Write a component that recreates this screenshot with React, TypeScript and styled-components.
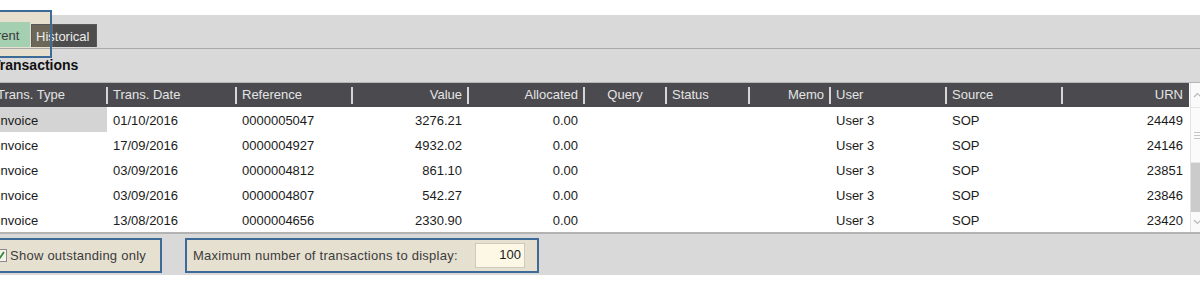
import styled, { createGlobalStyle } from "styled-components";

const GlobalStyle = createGlobalStyle`
  html, body {
    margin: 0;
    padding: 0;
    background: #fff;
  }
  body {
    font-family: "Liberation Sans", Arial, sans-serif;
    font-size: 13px;
  }
`;

type Align = "left" | "right" | "center";

const columns: { title: string; width: number; align: Align }[] = [
  { title: "Trans. Type", width: 116, align: "left" },
  { title: "Trans. Date", width: 129, align: "left" },
  { title: "Reference", width: 116, align: "left" },
  { title: "Value", width: 116, align: "right" },
  { title: "Allocated", width: 116, align: "right" },
  { title: "Query", width: 82, align: "center" },
  { title: "Status", width: 83, align: "left" },
  { title: "Memo", width: 81, align: "right" },
  { title: "User", width: 116, align: "left" },
  { title: "Source", width: 116, align: "left" },
  { title: "URN", width: 127, align: "right" },
];

const dataAlign: Align[] = [
  "left", "left", "left", "right", "right", "center", "left", "right", "left", "left", "right",
];

const rows = [
  ["Invoice", "01/10/2016", "0000005047", "3276.21", "0.00", "", "", "", "User 3", "SOP", "24449"],
  ["Invoice", "17/09/2016", "0000004927", "4932.02", "0.00", "", "", "", "User 3", "SOP", "24146"],
  ["Invoice", "03/09/2016", "0000004812", "861.10", "0.00", "", "", "", "User 3", "SOP", "23851"],
  ["Invoice", "03/09/2016", "0000004807", "542.27", "0.00", "", "", "", "User 3", "SOP", "23846"],
  ["Invoice", "13/08/2016", "0000004656", "2330.90", "0.00", "", "", "", "User 3", "SOP", "23420"],
];

export default function App() {
  return (
    <>
      <GlobalStyle />
      <Page>
        <Panel>
          <FocusFill />
          <TabRow>
            <Tab $active>Current</Tab>
            <Tab>Historical</Tab>
          </TabRow>
          <FocusBorder />
          <Title>Transactions</Title>
          <Table>
            <Grid>
              <HeaderRow>
                {columns.map((c, i) => (
                  <HeaderCell key={c.title} $w={c.width} $align={c.align} $sep={i < columns.length - 1}>
                    {c.title}
                  </HeaderCell>
                ))}
              </HeaderRow>
              {rows.map((r, ri) => (
                <Row key={ri}>
                  {r.map((v, ci) => (
                    <Cell key={ci} $w={columns[ci].width} $align={dataAlign[ci]} $selected={ri === 0 && ci === 0}>
                      {v}
                    </Cell>
                  ))}
                </Row>
              ))}
            </Grid>
            <ScrollBar>
              <ScrollButton $h={24}>
                <svg width="9" height="6" viewBox="0 0 9 6">
                  <path d="M1 5 L4.5 1.5 L8 5" fill="none" stroke="#b8b8b8" strokeWidth="1.2" />
                </svg>
              </ScrollButton>
              <Thumb>
                <Grip />
              </Thumb>
              <Track />
              <ScrollButton $h={20}>
                <svg width="9" height="6" viewBox="0 0 9 6">
                  <path d="M1 1 L4.5 4.5 L8 1" fill="none" stroke="#b8b8b8" strokeWidth="1.2" />
                </svg>
              </ScrollButton>
            </ScrollBar>
          </Table>
          <Footer>
            <GroupBox $w={174}>
              <CheckBox>
                <svg width="11" height="11" viewBox="0 0 11 11">
                  <path d="M2 5.5 L4.5 8.5 L9 2" fill="none" stroke="#2f8a3c" strokeWidth="1.8" />
                </svg>
              </CheckBox>
              <Label>Show outstanding only</Label>
            </GroupBox>
            <GroupBox $w={354}>
              <Label>Maximum number of transactions to display:</Label>
              <NumberBox>100</NumberBox>
            </GroupBox>
          </Footer>
        </Panel>
      </Page>
    </>
  );
}

const Page = styled.div`
  width: 1200px;
  height: 290px;
  overflow: hidden;
  padding-top: 15px;
  box-sizing: border-box;
`;

const Panel = styled.div`
  position: relative;
  margin-left: -30px;
  width: 1260px;
  height: 260px;
  background: #d9d9d9;
  display: flex;
  flex-direction: column;
`;

const FocusFill = styled.div`
  position: absolute;
  left: 0;
  top: -5px;
  width: 82px;
  height: 48px;
  background: #e7e0cf;
`;

const FocusBorder = styled.div`
  position: absolute;
  left: 0;
  top: -5px;
  width: 82px;
  height: 48px;
  box-sizing: border-box;
  border: 2px solid #3e6a97;
  pointer-events: none;
`;

const TabRow = styled.div`
  position: relative;
  display: flex;
  align-items: flex-end;
  height: 33px;
  border-bottom: 1px solid #a9a9a9;
  gap: 1px;
`;

const Tab = styled.div<{ $active?: boolean }>`
  height: ${(p) => (p.$active ? 25 : 23)}px;
  margin-bottom: 1px;
  display: flex;
  align-items: center;
  padding: 0 ${(p) => (p.$active ? "0 0 5px" : "0 0 4px")};
  font-size: 13px;
  white-space: nowrap;
  overflow: hidden;
  color: ${(p) => (p.$active ? "#3a3a3a" : "#ececec")};
  background: ${(p) =>
    p.$active ? "#a4cfb1" : "linear-gradient(to right, #6c6759 21px, #4d4d4d 21px)"};
  box-sizing: border-box;
  width: ${(p) => (p.$active ? "60px" : "66px")};
  border: 1px solid ${(p) => (p.$active ? "#a4cfb1" : "#5a5a5a")};
  border-bottom: none;
`;

const Title = styled.div`
  height: 33px;
  padding: 0 0 2px 22px;
  box-sizing: border-box;
  display: flex;
  align-items: center;
  font-size: 14px;
  font-weight: bold;
  color: #111;
`;

const Table = styled.div`
  display: flex;
  margin-left: 21px;
  border-top: 1px solid #b6b6b6;
  border-bottom: 2px solid #b3b3b3;
  background: #fff;
`;

const Grid = styled.div`
  display: flex;
  flex-direction: column;
`;

const HeaderRow = styled.div`
  display: flex;
  height: 24px;
  background: #4b4b4f;
`;

const HeaderCell = styled.div<{ $w: number; $align: Align; $sep: boolean }>`
  position: relative;
  width: ${(p) => p.$w}px;
  flex: none;
  box-sizing: border-box;
  padding: 0 6px 1px;
  display: flex;
  align-items: center;
  justify-content: ${(p) =>
    p.$align === "right" ? "flex-end" : p.$align === "center" ? "center" : "flex-start"};
  color: #e4e4e4;
  font-size: 13px;
  white-space: nowrap;
  &::after {
    content: "";
    display: ${(p) => (p.$sep ? "block" : "none")};
    position: absolute;
    right: -1px;
    top: 4px;
    bottom: 3px;
    width: 2px;
    background: #d6d6d6;
  }
`;

const Row = styled.div`
  display: flex;
  height: 25px;
`;

const Cell = styled.div<{ $w: number; $align: Align; $selected?: boolean }>`
  width: ${(p) => p.$w}px;
  flex: none;
  box-sizing: border-box;
  padding: 1px 6px 0;
  display: flex;
  align-items: center;
  justify-content: ${(p) =>
    p.$align === "right" ? "flex-end" : p.$align === "center" ? "center" : "flex-start"};
  background: ${(p) => (p.$selected ? "#d4d4d4" : "#fff")};
  color: #1b1b1b;
  font-size: 13px;
  white-space: nowrap;
`;

const ScrollBar = styled.div`
  width: 17px;
  margin-left: 1px;
  display: flex;
  flex-direction: column;
  background: #fff;
  border-left: 1px solid #e2e2e2;
`;

const ScrollButton = styled.div<{ $h: number }>`
  height: ${(p) => p.$h}px;
  display: flex;
  align-items: center;
  padding-left: 2px;
  background: #fafafa;
`;

const Thumb = styled.div`
  height: 56px;
  display: flex;
  align-items: center;
  background: #fbfbfb;
  border-top: 1px solid #e6e6e6;
  border-bottom: 1px solid #e6e6e6;
  box-sizing: border-box;
`;

const Grip = styled.div`
  margin-left: 3px;
  width: 7px;
  height: 5px;
  border-top: 1px solid #c6c6c6;
  border-bottom: 1px solid #c6c6c6;
  background: linear-gradient(#c6c6c6, #c6c6c6) center / 100% 1px no-repeat;
`;

const Track = styled.div`
  height: 49px;
  background: #cbcbcb;
`;

const Footer = styled.div`
  display: flex;
  gap: 23px;
  margin: 4px 0 0 18px;
`;

const GroupBox = styled.div<{ $w: number }>`
  width: ${(p) => p.$w}px;
  height: 35px;
  box-sizing: border-box;
  border: 2px solid #3e6a97;
  background: #e6e0d0;
  display: flex;
  align-items: center;
  padding: 0 10px 0 6px;
  gap: 3px;
`;

const CheckBox = styled.div`
  width: 13px;
  height: 13px;
  flex: none;
  box-sizing: border-box;
  border: 1px solid #8a8a8a;
  background: #f6f3ea;
  display: flex;
  align-items: center;
  justify-content: center;
  margin-left: -2px;
`;

const Label = styled.div`
  color: #3c3c3c;
  font-size: 13px;
  letter-spacing: 0.25px;
  white-space: nowrap;
  flex: 1;
`;

const NumberBox = styled.div`
  width: 50px;
  height: 25px;
  flex: none;
  box-sizing: border-box;
  border: 1px solid #cfcabc;
  background: #fdf8e6;
  color: #1b1b1b;
  font-size: 13px;
  display: flex;
  align-items: center;
  justify-content: flex-end;
  padding: 0 3px 2px 0;
  margin-right: 2px;
`;
